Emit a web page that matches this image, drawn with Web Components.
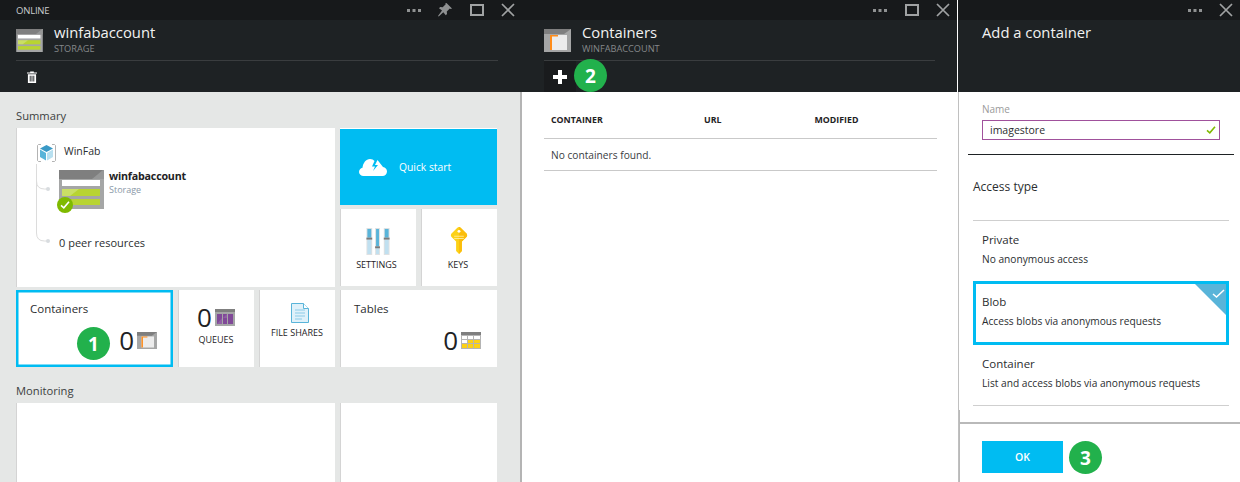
<!DOCTYPE html>
<html>
<head>
<meta charset="utf-8">
<title>Storage account</title>
<style>
  html, body { margin: 0; height: 482px; overflow: hidden; background: #fff; }
  body { font-family: "Open Sans", "Noto Sans", sans-serif; color: #1e2224; }
  #blades { display: flex; height: 482px; }
</style>
</head>
<body>
<div id="blades">

  <az-blade style="--blade-width:522px" divider="right" status="ONLINE" controls="dots pin max close">
    <az-icon slot="icon" name="storage" width="27" height="23"></az-icon>
    <span slot="title">winfabaccount</span>
    <span slot="subtitle">STORAGE</span>
    <az-icon slot="commands" name="trash" width="10" height="12" style="margin:10px 0 0 11px"></az-icon>

    <az-section heading="Summary">
      <az-tile style="grid-column:1/5;grid-row:1/3;height:159px">
        <resource-tree></resource-tree>
      </az-tile>
      <az-tile kind="accent" style="grid-column:5/7;grid-row:1">
        <az-icon name="cloud" width="28" height="18"></az-icon>
        <span>Quick start</span>
      </az-tile>
      <az-tile kind="tool" label="SETTINGS" style="grid-column:5;grid-row:2;--caps-shift:3px">
        <az-icon name="sliders" width="24" height="27"></az-icon>
      </az-tile>
      <az-tile kind="tool" label="KEYS" style="grid-column:6;grid-row:2;--caps-shift:2px">
        <az-icon name="key" width="18" height="27" style="margin-top:-1px;margin-bottom:1px"></az-icon>
      </az-tile>
      <az-tile kind="count" label="Containers" count="0" selected style="grid-column:1/3;grid-row:3">
        <az-icon name="container" width="20" height="17"></az-icon>
        <step-badge slot="badge" style="left:61px;top:37px">1</step-badge>
      </az-tile>
      <az-tile kind="mini" label="QUEUES" count="0" style="grid-column:3;grid-row:3">
        <az-icon name="queue" width="20" height="17"></az-icon>
      </az-tile>
      <az-tile kind="tool" label="FILE SHARES" style="grid-column:4;grid-row:3;--tool-top:13px;--caps-gap:4px">
        <az-icon name="file" width="18" height="20" style="margin-left:5px"></az-icon>
      </az-tile>
      <az-tile kind="count" label="Tables" count="0" style="grid-column:5/7;grid-row:3">
        <az-icon name="table" width="20" height="17"></az-icon>
      </az-tile>
    </az-section>

    <az-section heading="Monitoring" style="--row:90px">
      <az-tile style="grid-column:1/5"></az-tile>
      <az-tile style="grid-column:5/7"></az-tile>
    </az-section>
  </az-blade>

  <az-blade style="--blade-width:436px" white-edge status="" controls="dots max close">
    <az-icon slot="icon" name="container" width="27" height="23"></az-icon>
    <span slot="title">Containers</span>
    <span slot="subtitle">WINFABACCOUNT</span>
    <add-button slot="commands"></add-button>
    <step-badge slot="commands" style="left:30px;top:-2px">2</step-badge>

    <data-table columns="CONTAINER,URL,MODIFIED" empty="No containers found."></data-table>
  </az-blade>

  <az-blade style="--blade-width:282px" divider="left" status="" controls="dots close" plain>
    <span slot="title">Add a container</span>
    <add-container-form></add-container-form>
  </az-blade>

</div>

<script>
const ICONS = {
  storage: `<svg viewBox="0 0 45 39"><rect width="45" height="39" fill="#a5a6a6"/><rect width="45" height="9" fill="#7f7f7f"/>
    <path d="M45 0v9H33l11-9z" fill="#a5a6a6" opacity=".6"/>
    <rect x="3" y="10" width="38" height="6" fill="#fff"/><rect x="3" y="19" width="38" height="7" fill="#b8d432"/><rect x="3" y="29" width="38" height="6" fill="#b8d432"/>
    <path d="M3 19h17l-9 7H3zM3 29h1l-1 1z" fill="#fff" opacity=".25"/></svg>`,
  trash: `<svg viewBox="0 0 11 13"><path d="M3.500 1.500V.5h4v1H11v1.200H0V1.500zM1 3.500h9V13H1zM3 5v6.500h1V5zM5 5v6.500h1V5zM7 5v6.500h1V5z" fill="#fff" fill-rule="evenodd"/></svg>`,
  cloud: `<svg viewBox="0 0 28 18"><path d="M11 1c2 0 3.500.8 4.500 2L13 8.500h3L14 13l5-6h-3l2.500-5L24 9c2.200.4 4 1.800 4 4.500 0 2.700-2 4.500-4.500 4.500H4.500C2 18 0 16.300 0 14c0-2.300 1.500-3.800 3.500-4.300C4 5 7 1 11 1z" fill="#fff"/></svg>`,
  sliders: `<svg viewBox="0 0 24 28"><g fill="#dfe1e2"><rect width="6" height="28"/><rect x="9" width="5" height="28"/><rect x="18" width="6" height="28"/></g>
    <g fill="#59b4d9"><rect x="1" y="1" width="4" height="9"/><rect x="10" y="1" width="3" height="18"/><rect x="19" y="1" width="4" height="9"/></g>
    <g fill="#c0e0f0"><rect x="1" y="12" width="4" height="15"/><rect x="10" y="21" width="3" height="6"/><rect x="19" y="12" width="4" height="15"/></g>
    <g fill="#7a7a7a"><rect y="10" width="6" height="2"/><rect x="9" y="19" width="5" height="2"/><rect x="18" y="10" width="6" height="2"/></g></svg>`,
  key: `<svg viewBox="0 0 18 28"><path d="M9 0q1 0 2 1l6 6q1 1.500 0 3l-5 5v10l-3 3-3-3V15L1 10Q0 8.500 1 7l6-6q1-1 2-1z" fill="#fcd116"/><path d="M9 0q1 0 2 1l6 6q1 1.500 0 3l-5 5v10l-3 3z" fill="#fbbd0c"/><circle cx="9" cy="4.500" r="1.500" fill="#fff"/><path d="M4 9h10v1H4zM4 11.500h10v1H4z" fill="#ffe98a"/></svg>`,
  container: `<svg viewBox="0 0 27 23"><rect width="27" height="23" fill="#a5a6a6"/><path d="M0 0h27l-7 5H0z" fill="#7f7f7f"/><rect x="6" y="6" width="17" height="15" fill="#ececec"/><path d="M6 6h8v1.500H8V21H6z" fill="#ff8c1a"/></svg>`,
  queue: `<svg viewBox="0 0 20 17"><rect width="20" height="17" fill="#a5a6a6"/><rect width="20" height="3" fill="#7f7f7f"/><g fill="#804998"><rect x="2" y="5" width="5" height="10"/><rect x="8" y="5" width="4" height="10"/><rect x="13" y="5" width="5" height="10"/></g><path d="M2 15l5-6v6zM8 9l4-4v4z" fill="#fff" opacity=".12"/></svg>`,
  table: `<svg viewBox="0 0 20 17"><rect width="20" height="17" fill="#b4b4b4"/><rect width="20" height="3" fill="#7f7f7f"/>
    <g fill="#fff"><rect x="1" y="4" width="5" height="3"/><rect x="7" y="4" width="5" height="3"/><rect x="13" y="4" width="6" height="3"/><rect x="1" y="8" width="5" height="3"/></g>
    <g fill="#fcd116"><rect x="7" y="8" width="5" height="3"/><rect x="13" y="8" width="6" height="3"/><rect x="1" y="12" width="5" height="4"/><rect x="7" y="12" width="5" height="4"/><rect x="13" y="12" width="6" height="4"/></g></svg>`,
  file: `<svg viewBox="0 0 18 20"><path d="M.500.500h12l5 5v14H.500z" fill="#dff1fa" stroke="#59b4d9"/><path d="M12.500.500v5h5" fill="#fff" stroke="#59b4d9"/><path d="M4 7h10M4 10h10M4 13h10M4 16h7" stroke="#8ccbe8" stroke-width="1.200"/></svg>`,
  cube: `<svg viewBox="0 0 19 18"><path d="M4 .500H1.500l-1 1v15l1 1H4M15 .500h2.500l1 1v15l-1 1H15" fill="none" stroke="#a0a0a0" stroke-width=".8"/><path d="M9.500 1L16 4.500 9.500 8 3 4.500z" fill="#3999c6"/><path d="M3 5.500L9 9v7.500l-6-3.500z" fill="#59b4d9"/><path d="M16 5.500L10 9v7.500l6-3.500z" fill="#b8e0f0"/></svg>`,
  check: `<svg viewBox="0 0 12 10"><path d="M1 5.500l3.500 3L11 1" fill="none" stroke="currentColor" stroke-width="2"/></svg>`
};

class AzIcon extends HTMLElement {
  connectedCallback() {
    const w = this.getAttribute('width') || 16;
    const h = this.getAttribute('height') || 16;
    this.attachShadow({ mode: 'open' });
    this.shadowRoot.innerHTML = `
      <style>
        :host { display: block; flex: none; width: ${w}px; height: ${h}px; }
        svg { display: block; width: 100%; height: 100%; }
      </style>
      ${ICONS[this.getAttribute('name')]}
    `;
  }
}

class BladeControls extends HTMLElement {
  connectedCallback() {
    const glyphs = {
      dots: `<svg width="14" height="14" viewBox="0 0 14 14"><g fill="#8f9192"><rect y="6" width="3" height="3"/><rect x="5.500" y="6" width="3" height="3"/><rect x="11" y="6" width="3" height="3"/></g></svg>`,
      pin: `<svg width="14" height="14" viewBox="0 0 14 14"><path d="M8.500 0L14 5.500l-1.200.6-1-.6-3 3 .2 2.500-1.200 1.200-2.500-3L.700 13.500 0 13l4-5.500-3-2.300L2.200 4l2.500.2 3-3-.5-.8z" fill="#8f9192"/></svg>`,
      max: `<svg width="14" height="14" viewBox="0 0 14 14"><rect x="1" y="2" width="12" height="10" fill="none" stroke="#a0a2a3" stroke-width="2"/></svg>`,
      close: `<svg width="14" height="14" viewBox="0 0 14 14"><path d="M1 1l12 12M13 1L1 13" stroke="#a0a2a3" stroke-width="1.700" fill="none"/></svg>`
    };
    const names = (this.getAttribute('names') || '').split(' ');
    this.attachShadow({ mode: 'open' });
    this.shadowRoot.innerHTML = `
      <style>
        :host { display: flex; align-items: center; gap: 17.500px; margin-left: auto; margin-right: 7px; }
        svg { display: block; }
      </style>
      ${names.map(n => glyphs[n]).join('')}
    `;
  }
}

class AzBlade extends HTMLElement {
  connectedCallback() {
    const plain = this.hasAttribute('plain');
    const edge = this.hasAttribute('white-edge');
    this.attachShadow({ mode: 'open' });
    this.shadowRoot.innerHTML = `
      <style>
        :host { display: flex; flex-direction: column; flex: none; width: var(--blade-width); height: 482px; box-sizing: border-box; }
        #top { display: flex; align-items: center; height: 20px; background: #17191b; padding-left: 16px; flex: none; }
        #status { font-size: 9.500px; letter-spacing: -.2px; color: #c9cbcc; }
        #head { height: 72px; background: #1e2224; flex: none; padding: 0 ${edge ? 22 : 24}px 0 ${edge ? 22 : 16}px; box-sizing: border-box; }
        #title-row { display: flex; height: 41px; border-bottom: ${plain ? 'none' : '1px solid #3a3d3f'}; box-sizing: border-box; gap: 11px; align-items: flex-start; padding-top: 9px; }
        :host([plain]) #title-row { padding-left: 8px; padding-top: 0; }
        #titles { display: flex; flex-direction: column; margin-top: -9px; }
        :host([plain]) #titles { margin-top: 0; }
        ::slotted([slot="title"]) { font-size: 14.800px; line-height: 24px; color: #f2f2f2; }
        ::slotted([slot="subtitle"]) { font-size: 9.200px; line-height: 12px; color: #85888a; margin-top: -1px; }
        #commands { position: relative; height: 31px; display: flex; align-items: flex-start; }
        #body { flex: 1; min-height: 0; position: relative; background: #fff; overflow: hidden; }
        :host([divider="right"]) #body { background: #e5e7e6; border-right: 2px solid #b4b4b4; }
        :host([divider="left"]) #body { border-left: 1px solid #c0c0c0; }
        :host([white-edge]) #top, :host([white-edge]) #head { border-right: 1px solid #fff; }
      </style>
      <div id="top"><span id="status">${this.getAttribute('status') || ''}</span><blade-controls names="${this.getAttribute('controls')}"></blade-controls></div>
      <div id="head">
        <div id="title-row">
          <slot name="icon"></slot>
          <div id="titles"><slot name="title"></slot><slot name="subtitle"></slot></div>
        </div>
        <div id="commands"><slot name="commands"></slot></div>
      </div>
      <div id="body"><slot></slot></div>
    `;
  }
}

class AzSection extends HTMLElement {
  connectedCallback() {
    this.attachShadow({ mode: 'open' });
    this.shadowRoot.innerHTML = `
      <style>
        :host { display: block; padding: 15px 0 0 16px; }
        h2 { margin: 0 0 4px; font-size: 11.200px; line-height: 17px; font-weight: 400; color: #3c3f41; }
        #grid { display: grid; grid-template-columns: repeat(6, 76px); grid-auto-rows: var(--row, 77px); gap: 4px 5px; }
      </style>
      <h2>${this.getAttribute('heading')}</h2>
      <div id="grid"><slot></slot></div>
    `;
  }
}

class AzTile extends HTMLElement {
  connectedCallback() {
    const kind = this.getAttribute('kind') || 'plain';
    const label = this.getAttribute('label') || '';
    const count = this.getAttribute('count');
    const layouts = {
      plain: `<slot></slot>`,
      accent: `<div class="accent"><slot></slot></div>`,
      tool: `<div class="tool"><slot></slot><span class="caps">${label}</span></div>`,
      mini: `<div class="mini"><div class="row"><span class="num">${count}</span><slot></slot></div><span class="caps">${label}</span></div>`,
      count: `<div class="count"><span class="name">${label}</span><div class="row"><span class="num">${count}</span><slot></slot></div></div>`
    };
    this.attachShadow({ mode: 'open' });
    this.shadowRoot.innerHTML = `
      <style>
        :host { display: block; position: relative; background: #fff; box-sizing: border-box; box-shadow: inset 1px 0 0 #d4d4d4; min-width: 0; }
        :host([kind="accent"]) { background: #00bcf2; box-shadow: inset 0 1px 0 #fff; }
        :host([selected]) { box-shadow: inset 0 0 0 2.500px #00bcf2; }
        .accent { display: flex; align-items: center; height: 100%; padding: 0 0 0 19px; gap: 12px; font-size: 10.300px; color: #fff; }
        .tool { display: flex; flex-direction: column; align-items: center; padding-top: var(--tool-top, 19px); height: 100%; box-sizing: border-box; }
        .caps { font-size: 9px; line-height: 12px; color: #1e2224; margin-top: var(--caps-gap, 4px); margin-right: var(--caps-shift, 0); white-space: nowrap; }
        .mini { display: flex; flex-direction: column; align-items: center; padding-top: 10px; }
        .mini .caps { margin-top: 0; }
        .row { display: flex; align-items: center; gap: 3px; }
        .num { font-size: 26px; line-height: 34px; font-weight: 400; color: #1e2224; }
        .count { display: flex; flex-direction: column; height: 100%; padding: 10px 16px 10px 14px; box-sizing: border-box; }
        .name { font-size: 11.500px; line-height: 18px; color: #2b2e30; }
        .count .row { margin-top: auto; justify-content: flex-end; }
      </style>
      ${layouts[kind]}
      <slot name="badge"></slot>
    `;
  }
}

class StepBadge extends HTMLElement {
  constructor() {
    super();
    this.attachShadow({ mode: 'open' });
    this.shadowRoot.innerHTML = `
      <style>
        :host { position: absolute; display: flex; align-items: center; justify-content: center; width: 33px; height: 33px; border-radius: 50%; background: #22b14c; color: #fff; font-size: 19px; font-weight: 700; z-index: 2; }
      </style>
      <slot></slot>
    `;
  }
}

class AddButton extends HTMLElement {
  constructor() {
    super();
    this.attachShadow({ mode: 'open' });
    this.shadowRoot.innerHTML = `
      <style>
        :host { display: flex; align-items: center; justify-content: center; width: 32px; height: 31px; background: #191b1d; }
        svg { display: block; }
      </style>
      <svg width="16" height="16" viewBox="0 0 16 16"><path d="M6 1h4v5h5v4h-5v5H6v-5H1V6h5z" fill="#fff"/></svg>
    `;
  }
}

class ResourceTree extends HTMLElement {
  constructor() {
    super();
    this.attachShadow({ mode: 'open' });
    this.shadowRoot.innerHTML = `
      <style>
        :host { display: block; position: relative; height: 100%; padding: 16px 0 0 21px; box-sizing: border-box; font-size: 11px; color: #2b2e30; }
        #group { display: flex; align-items: center; gap: 8px; line-height: 18px; }
        #group span { position: relative; top: -2px; font-size: 10.500px; }
        #lines { position: absolute; left: 19px; top: 36px; }
        #resource { display: flex; gap: 5px; margin: 8px 0 0 22px; position: relative; }
        #check { position: absolute; left: -2px; top: 27px; width: 16px; height: 16px; border-radius: 50%; background: #7fba00; color: #fff; display: flex; align-items: center; justify-content: center; }
        #names { margin-top: -1px; }
        b { display: block; font-size: 10.700px; font-weight: 700; line-height: 14px; color: #1e2224; letter-spacing: -.2px; }
        small { display: block; font-size: 9px; line-height: 14px; color: #8a99a8; }
        #peers { margin: 25px 0 0 22px; line-height: 17px; }
      </style>
      <svg id="lines" width="20" height="80" viewBox="0 0 20 80" fill="none">
        <path d="M1.500 0v69q0 8 8 8h4M1.500 17q0 8 8 8h4" stroke="#dcdcdc"/>
        <circle cx="13" cy="25" r="2" fill="#d8dcdf"/><circle cx="13" cy="77" r="2" fill="#d8dcdf"/>
      </svg>
      <div id="group"><az-icon name="cube" width="19" height="18"></az-icon><span>WinFab</span></div>
      <div id="resource">
        <az-icon name="storage" width="45" height="39"></az-icon>
        <div id="check"><az-icon name="check" width="10" height="8"></az-icon></div>
        <div id="names"><b>winfabaccount</b><small>Storage</small></div>
      </div>
      <div id="peers">0 peer resources</div>
    `;
  }
}

class DataTable extends HTMLElement {
  connectedCallback() {
    const cols = this.getAttribute('columns').split(',');
    const widths = [153, 110.500, 0];
    this.attachShadow({ mode: 'open' });
    this.shadowRoot.innerHTML = `
      <style>
        :host { display: block; margin: 0 21px 0 22px; font-size: 10.200px; color: #3a3d3f; }
        #head { display: flex; height: 47px; align-items: flex-end; padding: 0 0 12px 7px; box-sizing: border-box; border-bottom: 1px solid #c9c9c9; }
        #head span { font-size: 8.800px; font-weight: 700; color: #1e2224; line-height: 12px; }
        #empty { padding-left: 7px; height: 32px; line-height: 33px; box-sizing: border-box; border-bottom: 1px solid #c9c9c9; }
      </style>
      <div id="head">${cols.map((c, i) => `<span style="${widths[i] ? `flex:0 0 ${widths[i]}px` : ''}">${c}</span>`).join('')}</div>
      <div id="empty">${this.getAttribute('empty')}</div>
    `;
  }
}

class AccessOption extends HTMLElement {
  connectedCallback() {
    this.attachShadow({ mode: 'open' });
    this.shadowRoot.innerHTML = `
      <style>
        :host { display: block; position: relative; box-sizing: border-box; height: 60px; padding: 9px 9px 0 9px; }
        :host([selected]) { border: 3px solid #00bcf2; padding: 8px 6px 0 6px; height: 64px; }
        #name { font-size: 11.500px; line-height: 19px; color: #2b2e30; }
        #desc { font-size: 10.200px; line-height: 20px; color: #2b2e30; white-space: nowrap; }
        #corner { position: absolute; right: 0; top: 0; display: none; }
        :host([selected]) #corner { display: block; }
      </style>
      <div id="name">${this.getAttribute('name')}</div>
      <div id="desc">${this.getAttribute('desc')}</div>
      <svg id="corner" width="31" height="31" viewBox="0 0 31 31"><path d="M0 0h31v31z" fill="#59b4d9"/><path d="M18 10l3.500 3L29 6" fill="none" stroke="#fff" stroke-width="1.500"/></svg>
    `;
  }
}

class AddContainerForm extends HTMLElement {
  constructor() {
    super();
    this.attachShadow({ mode: 'open' });
    this.shadowRoot.innerHTML = `
      <style>
        :host { display: flex; flex-direction: column; height: 390px; }
        #scroll { flex: none; height: 330px; box-sizing: border-box; }
        #name-field { padding: 9px 0 0 14px; margin: 0 6px 0 9px; border-bottom: 1px solid #1e2224; height: 63px; box-sizing: border-box; }
        label { display: block; font-size: 10px; line-height: 16px; color: #9a9a9a; }
        #input { display: flex; align-items: center; justify-content: space-between; box-sizing: border-box; height: 20px; width: 238px; border: 1px solid #a0519c; padding: 0 3px 0 7px; font-size: 10.500px; color: #2b2e30; margin-top: 3px; }
        #input az-icon { color: #7fba00; }
        h3 { margin: 0 11px 0 14px; padding: 23px 0 0; height: 66px; box-sizing: border-box; font-size: 12px; line-height: 18px; font-weight: 400; color: #2b2e30; border-bottom: 1px solid #cfcfcf; }
        #options { margin: 0 11px 0 14px; border-bottom: 1px solid #cfcfcf; }
        #footer { flex: none; box-sizing: border-box; height: 60px; margin-left: 1px; border-top: 2px solid #b9b9b9; padding: 17px 0 0 22px; display: flex; position: relative; }
        #footer::before { content: ""; position: absolute; left: -2px; top: -14px; bottom: 0; width: 2px; background: #b9b9b9; }
        #ok { width: 81px; height: 32px; background: #00bcf2; color: #fff; font-size: 10.500px; font-weight: 600; display: flex; align-items: center; justify-content: center; }
      </style>
      <div id="scroll">
        <div id="name-field">
          <label>Name</label>
          <div id="input"><span>imagestore</span><az-icon name="check" width="10" height="8"></az-icon></div>
        </div>
        <div id="access">
          <h3>Access type</h3>
          <div id="options">
            <access-option name="Private" desc="No anonymous access"></access-option>
            <access-option name="Blob" desc="Access blobs via anonymous requests" selected></access-option>
            <access-option name="Container" desc="List and access blobs via anonymous requests"></access-option>
          </div>
        </div>
      </div>
      <div id="footer">
        <div id="ok">OK</div>
        <step-badge style="left:109px;top:17px">3</step-badge>
      </div>
    `;
  }
}

customElements.define('az-icon', AzIcon);
customElements.define('blade-controls', BladeControls);
customElements.define('az-blade', AzBlade);
customElements.define('az-section', AzSection);
customElements.define('az-tile', AzTile);
customElements.define('step-badge', StepBadge);
customElements.define('add-button', AddButton);
customElements.define('resource-tree', ResourceTree);
customElements.define('data-table', DataTable);
customElements.define('access-option', AccessOption);
customElements.define('add-container-form', AddContainerForm);
</script>
</body>
</html>
